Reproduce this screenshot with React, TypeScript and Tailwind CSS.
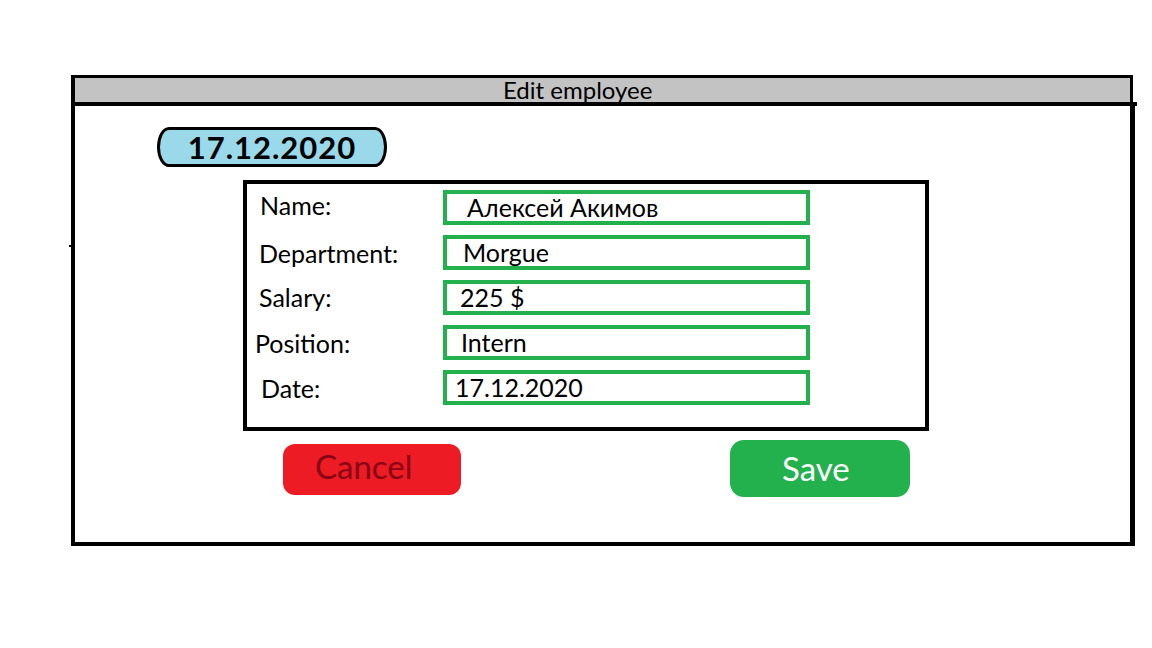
import React from 'react'

const font = { fontFamily: 'Lato, "Open Sans", "Noto Sans", sans-serif' }

type Row = {
  label: string
  value: string
  labelCls: string
  valueCls: string
}

const rows: Row[] = [
  { label: 'Name:', value: 'Алексей Акимов', labelCls: 'pl-[13px] pt-[3px]', valueCls: 'pl-[20px]' },
  { label: 'Department:', value: 'Morgue', labelCls: 'pl-[12px] pt-[6px]', valueCls: 'pl-[16px]' },
  { label: 'Salary:', value: '225 $', labelCls: 'pl-[12px] pt-[5px]', valueCls: 'pl-[13px]' },
  { label: 'Position:', value: 'Intern', labelCls: 'pl-[8px] pt-[6px]', valueCls: 'pl-[14px]' },
  { label: 'Date:', value: '17.12.2020', labelCls: 'pl-[14px] pt-[6px]', valueCls: 'pl-[8px]' },
]

export default function App() {
  return (
    <div className="min-h-[648px] w-[1152px] bg-white text-black" style={font}>
      <div className="ml-[71px] pt-[75px] w-[1066px]">
        {/* title bar */}
        <div className="flex h-[27px] w-[1062px] items-center border-x-[3px] border-l-4 border-t-[3px] border-black bg-[#c3c3c3] pl-[428px]">
          <span className="text-[24px] leading-none">Edit employee</span>
        </div>
        <div className="h-[4px] w-[1066px] bg-black" />

        {/* body */}
        <div className="relative flex h-[440px] w-[1064px] flex-col items-start border-b-4 border-l-4 border-r-[5px] border-black">
          <div className="absolute -left-[6px] top-[139px] h-[2px] w-[2px] bg-black" />

          <div className="ml-[82px] mt-[21px] flex h-[40px] w-[230px] items-center justify-center rounded-[12px/20px] border-[3px] border-black bg-[#99d9ea]">
            <span className="text-[31px] font-bold leading-none tracking-[1px]">17.12.2020</span>
          </div>

          <div className="ml-[168px] mt-[13px] h-[251px] w-[686px] border-4 border-black pt-[6px]">
            <div className="flex flex-col gap-[10px]">
              {rows.map((row) => (
                <div key={row.label} className="flex items-start">
                  <div className={`w-[196px] text-[25px] leading-none ${row.labelCls}`}>{row.label}</div>
                  <div
                    className={`flex h-[35px] w-[367px] items-center border-4 border-[#22b14c] text-[25px] leading-none ${row.valueCls}`}
                  >
                    {row.value}
                  </div>
                </div>
              ))}
            </div>
          </div>

          <div className="ml-[208px] mt-[9px] flex items-start">
            <button className="mt-[4px] flex h-[51px] w-[178px] items-center rounded-[12px] bg-[#ed1c24] pb-[6px] pl-[32px] text-[33px] leading-none text-[#880015]">
              Cancel
            </button>
            <button className="ml-[269px] flex h-[57px] w-[180px] items-center rounded-[14px] bg-[#22b14c] pl-[52px] text-[33px] leading-none text-white">
              Save
            </button>
          </div>
        </div>
      </div>
    </div>
  )
}
